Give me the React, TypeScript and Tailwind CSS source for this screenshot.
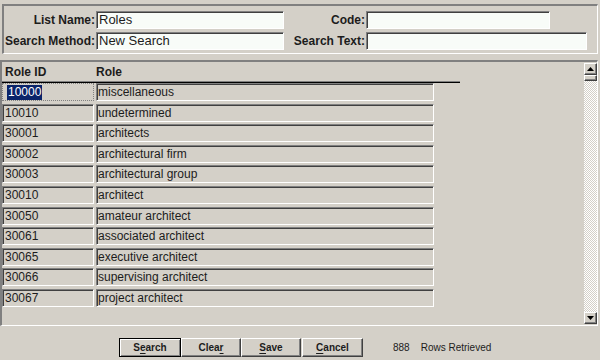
import React from "react";

type RoleRow = { id: string; role: string };

const rows: RoleRow[] = [
  { id: "10000", role: "miscellaneous" },
  { id: "10010", role: "undetermined" },
  { id: "30001", role: "architects" },
  { id: "30002", role: "architectural firm" },
  { id: "30003", role: "architectural group" },
  { id: "30010", role: "architect" },
  { id: "30050", role: "amateur architect" },
  { id: "30061", role: "associated architect" },
  { id: "30065", role: "executive architect" },
  { id: "30066", role: "supervising architect" },
  { id: "30067", role: "project architect" },
];

const sunken =
  "border border-t-[#808080] border-l-[#808080] border-b-white border-r-white shadow-[inset_1px_1px_0_#404040]";
const raised =
  "border border-t-white border-l-white border-b-[#404040] border-r-[#404040] shadow-[inset_-1px_-1px_0_#808080]";

function Field({ value, width }: { value: string; width: string }) {
  return (
    <div
      className={`${sunken} ${width} h-[18px] bg-[#f8fcf8] pl-[2px] text-[13px] leading-[15px] text-[#1c1c1c]`}
    >
      {value}
    </div>
  );
}

function Label({ text, width }: { text: string; width: string }) {
  return (
    <div className={`${width} pr-[1px] text-right text-[12px] font-bold text-[#1c1c1c]`}>
      {text}
    </div>
  );
}

function ScrollButton({ down }: { down?: boolean }) {
  return (
    <div className={`${raised} flex h-[12px] w-full items-center justify-center bg-[#d4d0c8]`}>
      <svg width="7" height="4" viewBox="0 0 7 4">
        {down ? (
          <polygon points="0,0 7,0 3.5,4" fill="#000" />
        ) : (
          <polygon points="0,4 7,4 3.5,0" fill="#000" />
        )}
      </svg>
    </div>
  );
}

function Button({
  before,
  mnemonic,
  after,
  isDefault,
  width,
}: {
  before: string;
  mnemonic: string;
  after: string;
  isDefault?: boolean;
  width: string;
}) {
  return (
    <div
      className={`${width} flex h-[19px] items-center justify-center bg-[#d4d0c8] text-[10px] font-bold text-[#1c1c1c] ${
        isDefault
          ? "border border-black shadow-[inset_1px_1px_0_#fff,inset_-1px_-1px_0_#808080]"
          : raised
      }`}
    >
      {before}
      <span className="underline underline-offset-2">{mnemonic}</span>
      {after}
    </div>
  );
}

export default function App() {
  return (
    <div className="flex h-[360px] w-[600px] flex-col overflow-hidden bg-[#d4d0c8] font-[Liberation_Sans,Arial,sans-serif]">
      {/* search criteria */}
      <div className="mx-[2px] mt-[4px] flex h-[50px] flex-col gap-[3px] border-t-2 border-l-2 border-t-[#808080] border-l-[#808080] border-b border-r border-b-white border-r-white pt-[5px]">
        <div className="flex items-center">
          <Label text="List Name:" width="w-[92px]" />
          <Field value="Roles" width="w-[188px]" />
          <Label text="Code:" width="w-[82px]" />
          <Field value="" width="w-[184px]" />
        </div>
        <div className="flex items-center">
          <Label text="Search Method:" width="w-[92px]" />
          <Field value="New Search" width="w-[188px]" />
          <Label text="Search Text:" width="w-[82px]" />
          <Field value="" width="w-[221px]" />
        </div>
      </div>

      {/* results */}
      <div className="mt-[6px] flex h-[266px] w-[598px] border-t-2 border-l-2 border-t-[#808080] border-l-[#808080] border-b border-r border-b-white border-r-white">
        <div className="flex flex-1 flex-col">
          <div className="flex h-[19px] items-center text-[12px] font-bold text-[#1c1c1c]">
            <div className="w-[94px] pl-[3px]">Role ID</div>
            <div>Role</div>
          </div>
          <div className="h-[2px] w-[458px] border-t border-t-[#808080] border-b border-b-black" />
          {rows.map((r, idx) => (
            <div key={r.id} className="flex h-[20.6px] gap-[2px]">
              {idx === 0 ? (
                <div className="flex h-[18px] w-[92px] items-center border border-dotted border-[#808080] pl-[4px]">
                  <span className="bg-[#0a246a] px-[1px] text-[12px] leading-[15px] text-white">
                    {r.id}
                  </span>
                </div>
              ) : (
                <div
                  className={`${sunken} flex h-[18px] w-[92px] items-center pl-[2px] text-[12px] text-[#1c1c1c]`}
                >
                  {r.id}
                </div>
              )}
              <div
                className={`${sunken} flex h-[18px] w-[338px] items-center pl-[1px] text-[12px] text-[#1c1c1c]`}
              >
                {r.role}
              </div>
            </div>
          ))}
        </div>
        <div className="mt-[1px] mb-[1px] flex w-[13px] flex-col">
          <ScrollButton />
          <div className={`${raised} h-[6px] bg-[#d4d0c8]`} />
          <div className="flex-1 bg-[repeating-conic-gradient(#d4d0c8_0%_25%,#ffffff_0%_50%)] bg-[length:2px_2px]" />
          <ScrollButton down />
        </div>
      </div>

      {/* actions */}
      <div className="flex items-center pt-[12px] pl-[119px]">
        <Button before="S" mnemonic="e" after="arch" isDefault width="w-[62px]" />
        <Button before="Clea" mnemonic="r" after="" width="w-[60px]" />
        <Button before="" mnemonic="S" after="ave" width="w-[60px]" />
        <div className="w-[1px]" />
        <Button before="" mnemonic="C" after="ancel" width="w-[61px]" />
        <div className="ml-[30px] text-[10px] text-[#1c1c1c]">888</div>
        <div className="ml-[11px] text-[10px] text-[#1c1c1c]">Rows Retrieved</div>
      </div>
    </div>
  );
}
